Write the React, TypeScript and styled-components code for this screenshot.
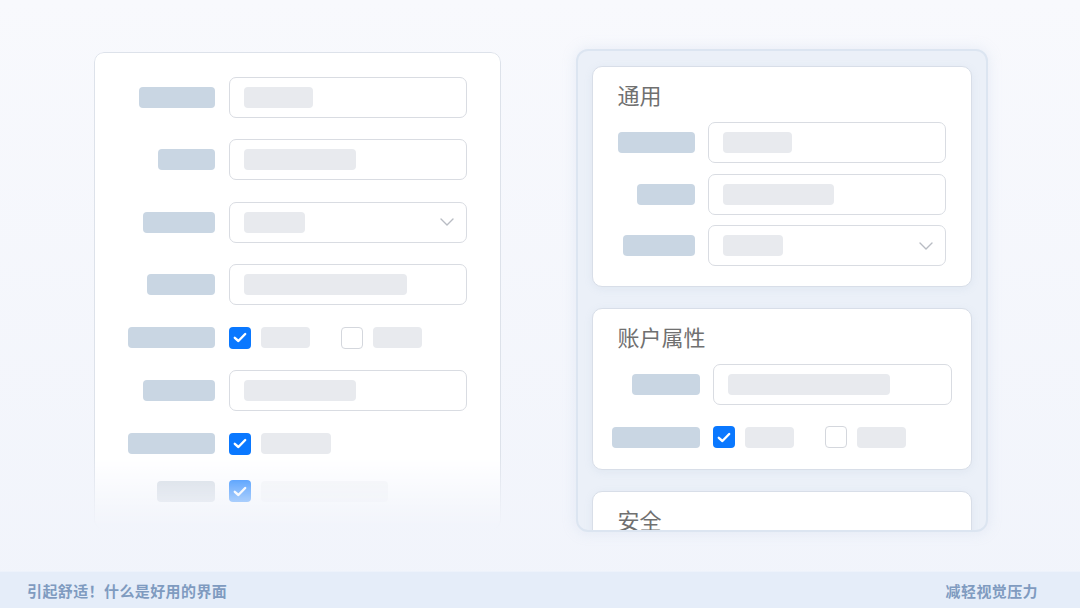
import styled, { createGlobalStyle } from "styled-components";

const GlobalStyle = createGlobalStyle`
    * { box-sizing: border-box; }
    body {
        margin: 0;
        font-family: "Noto Sans CJK SC", "Noto Sans", sans-serif;
    }
`;

const Page = styled.div`
    width: 1080px;
    height: 608px;
    display: flex;
    flex-direction: column;
    background: linear-gradient(180deg, #f8f9fd 0%, #f1f4fb 100%);
    overflow: hidden;
`;

const Stage = styled.main`
    flex: 1;
    display: flex;
    align-items: flex-start;
    gap: 75px;
    padding-left: 94px;
`;

const FormCard = styled.section`
    width: 407px;
    height: 478px;
    margin-top: 52px;
    padding-top: 23.5px;
    background: #ffffff;
    border: 1.5px solid #dde2ea;
    border-radius: 10px;
    box-shadow: 0 0 14px rgba(170, 188, 215, 0.22);
    -webkit-mask-image: linear-gradient(180deg, #000 0, #000 404px, rgba(0, 0, 0, 0.5) 436px, rgba(0, 0, 0, 0.2) 458px, transparent 478px);
    mask-image: linear-gradient(180deg, #000 0, #000 404px, rgba(0, 0, 0, 0.5) 436px, rgba(0, 0, 0, 0.2) 458px, transparent 478px);
`;

const FieldList = styled.div<{ $gap: number }>`
    display: flex;
    flex-direction: column;
    gap: ${(p) => p.$gap}px;
`;

const LabelBar = styled.div<{ $w: number }>`
    width: ${(p) => p.$w}px;
    height: 21px;
    border-radius: 4px;
    background: #c9d6e3;
`;

const ValueBar = styled.div<{ $w: number }>`
    width: ${(p) => p.$w}px;
    height: 21px;
    border-radius: 4px;
    background: #e8eaee;
`;

const LabelSlot = styled.div`
    display: flex;
    justify-content: flex-end;
    flex-shrink: 0;
`;

const FieldRow = styled.div<{ $labelCol: number; $gap: number; $height: number; $offset?: number; $faded?: boolean }>`
    display: flex;
    align-items: center;
    gap: ${(p) => p.$gap}px;
    height: ${(p) => p.$height}px;
    margin-top: ${(p) => p.$offset ?? 0}px;
    filter: ${(p) => (p.$faded ? "blur(0.7px)" : "none")};

    ${LabelSlot} {
        width: ${(p) => p.$labelCol}px;
    }

    ${LabelBar} {
        background: ${(p) => (p.$faded ? "#d3dae2" : "#c9d6e3")};
    }

    ${ValueBar} {
        opacity: ${(p) => (p.$faded ? 0.4 : 1)};
    }
`;

const InputBox = styled.div<{ $w: number }>`
    width: ${(p) => p.$w}px;
    height: 100%;
    display: flex;
    align-items: center;
    justify-content: space-between;
    padding: 0 12px 0 14px;
    background: #ffffff;
    border: 1.5px solid #d9dce2;
    border-radius: 7px;
`;

const OptionGroup = styled.div`
    display: flex;
    align-items: center;
    gap: 31px;
`;

const Option = styled.div`
    display: flex;
    align-items: center;
    gap: 10px;
`;

const CheckBox = styled.div<{ $checked?: boolean }>`
    width: 22px;
    height: 22px;
    border-radius: 4px;
    display: flex;
    align-items: center;
    justify-content: center;
    background: ${(p) => (p.$checked ? "#0a78ff" : "#ffffff")};
    border: ${(p) => (p.$checked ? "none" : "1.5px solid #d4d7dd")};
`;

const SettingsPanel = styled.section`
    width: 412px;
    height: 483px;
    margin-top: 49px;
    padding: 15px 14px;
    display: flex;
    flex-direction: column;
    gap: 21px;
    background: #ebf0f8;
    border: 2px solid #dce5f1;
    border-radius: 12px;
    box-shadow: 0 0 14px rgba(180, 198, 225, 0.25);
    overflow: hidden;
`;

const SectionCard = styled.div<{ $bottom: number }>`
    flex-shrink: 0;
    padding: 13px 0 ${(p) => p.$bottom}px;
    background: #ffffff;
    border: 1.5px solid #d8dee8;
    border-radius: 10px;
    box-shadow: 0 2px 8px rgba(150, 170, 200, 0.12);
`;

const SectionTitle = styled.h2<{ $after: number }>`
    margin: 0 0 ${(p) => p.$after}px;
    padding-left: 24.5px;
    font-size: 22px;
    line-height: 28px;
    font-weight: 400;
    color: #707070;
`;

const Footer = styled.footer`
    height: 37px;
    display: flex;
    align-items: center;
    justify-content: space-between;
    padding: 0 42px 0 27px;
    background: #e5edf9;
    border-top: 1px solid #edf2fb;
    font-size: 15px;
    font-weight: 700;
    color: #7f9bc0;
    letter-spacing: 0.4px;
`;

function Chevron() {
    return (
        <svg width="14" height="8" viewBox="0 0 14 8" fill="none">
            <polyline points="1,1 7,7 13,1" stroke="#b8bcc3" strokeWidth="1.4" strokeLinecap="round" strokeLinejoin="round" />
        </svg>
    );
}

function Tick() {
    return (
        <svg width="14" height="11" viewBox="0 0 14 11" fill="none">
            <polyline points="1.8,5.8 5.4,9 12.2,2" stroke="#ffffff" strokeWidth="2.4" strokeLinecap="round" strokeLinejoin="round" />
        </svg>
    );
}

type Field =
    | { kind: "input"; label: number; value: number; select?: boolean }
    | { kind: "check"; label: number; options: { checked: boolean; value: number }[] };

type RowLayout = { labelCol: number; gap: number; inputWidth: number };

function FieldView({ field, layout, offset, faded }: { field: Field; layout: RowLayout; offset?: number; faded?: boolean }) {
    if (field.kind === "input") {
        return (
            <FieldRow $labelCol={layout.labelCol} $gap={layout.gap} $height={41} $offset={offset} $faded={faded}>
                <LabelSlot><LabelBar $w={field.label} /></LabelSlot>
                <InputBox $w={layout.inputWidth}>
                    <ValueBar $w={field.value} />
                    {field.select && <Chevron />}
                </InputBox>
            </FieldRow>
        );
    }
    return (
        <FieldRow $labelCol={layout.labelCol} $gap={layout.gap} $height={22} $offset={offset} $faded={faded}>
            <LabelSlot><LabelBar $w={field.label} /></LabelSlot>
            <OptionGroup>
                {field.options.map((o, i) => (
                    <Option key={i}>
                        <CheckBox $checked={o.checked}>{o.checked && <Tick />}</CheckBox>
                        <ValueBar $w={o.value} />
                    </Option>
                ))}
            </OptionGroup>
        </FieldRow>
    );
}

const leftFields: Field[] = [
    { kind: "input", label: 76, value: 69 },
    { kind: "input", label: 57, value: 112 },
    { kind: "input", label: 72, value: 61, select: true },
    { kind: "input", label: 68, value: 163 },
    { kind: "check", label: 87, options: [{ checked: true, value: 49 }, { checked: false, value: 49 }] },
    { kind: "input", label: 72, value: 112 },
    { kind: "check", label: 87, options: [{ checked: true, value: 70 }] },
    { kind: "check", label: 58, options: [{ checked: true, value: 127 }] },
];

const generalFields: Field[] = [
    { kind: "input", label: 77, value: 69 },
    { kind: "input", label: 58, value: 111 },
    { kind: "input", label: 72, value: 60, select: true },
];

const accountFields: Field[] = [
    { kind: "input", label: 68, value: 162 },
    { kind: "check", label: 88, options: [{ checked: true, value: 49 }, { checked: false, value: 49 }] },
];

export default function App() {
    const leftLayout = { labelCol: 119.5, gap: 14, inputWidth: 238 };
    return (
        <>
            <GlobalStyle />
            <Page>
                <Stage>
                    <FormCard>
                        <FieldList $gap={21.5}>
                            {leftFields.map((f, i) => (
                                <FieldView
                                    key={i}
                                    field={f}
                                    layout={leftLayout}
                                    offset={i === leftFields.length - 1 ? 4 : 0}
                                    faded={i === leftFields.length - 1}
                                />
                            ))}
                        </FieldList>
                    </FormCard>

                    <SettingsPanel>
                        <SectionCard $bottom={19.5}>
                            <SectionTitle $after={14}>通用</SectionTitle>
                            <FieldList $gap={10.5}>
                                {generalFields.map((f, i) => (
                                    <FieldView key={i} field={f} layout={{ labelCol: 101.5, gap: 13, inputWidth: 238 }} />
                                ))}
                            </FieldList>
                        </SectionCard>
                        <SectionCard $bottom={20.5}>
                            <SectionTitle $after={14.5}>账户属性</SectionTitle>
                            <FieldList $gap={21}>
                                {accountFields.map((f, i) => (
                                    <FieldView key={i} field={f} layout={{ labelCol: 106.5, gap: 13, inputWidth: 239 }} />
                                ))}
                            </FieldList>
                        </SectionCard>
                        <SectionCard $bottom={40}>
                            <SectionTitle $after={0}>安全</SectionTitle>
                        </SectionCard>
                    </SettingsPanel>
                </Stage>
                <Footer>
                    <span>引起舒适！什么是好用的界面</span>
                    <span>减轻视觉压力</span>
                </Footer>
            </Page>
        </>
    );
}
